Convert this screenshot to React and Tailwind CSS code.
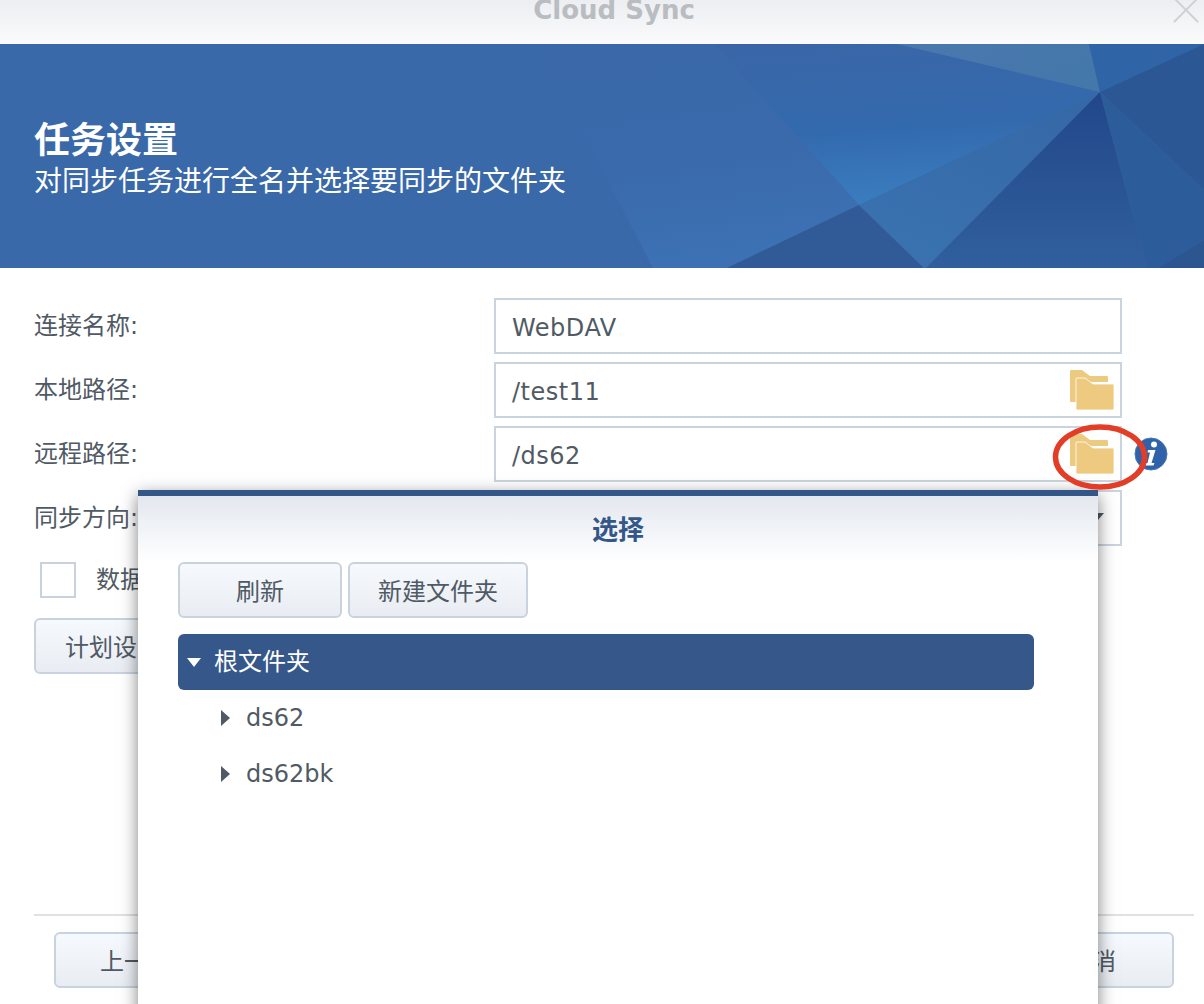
import React from 'react';
import { X } from 'lucide-react';

const btn = "h-14 shrink-0 rounded-md border-2 border-[#c9d3de] bg-gradient-to-b from-[#f6f9fd] to-[#e9edf3] pt-1 text-[24px] text-[#505a64] flex items-center justify-center";
const field = "relative h-14 w-[628px] shrink-0 border-2 border-[#c9d4df] bg-white pl-[16px] pt-[3px] flex items-center text-[24px] tracking-[0.5px] text-[#505a64]";
const label = "w-[494px] shrink-0 pl-[34px] text-[24px] text-[#505a64]";

const FolderIcon = () => (
  <svg width="44" height="40" viewBox="0 0 44 40" className="absolute left-[574px] top-[6px]">
    <path d="M1 0H12L20 6H37a1 1 0 0 1 1 1V12H6V32H1a1 1 0 0 1-1-1V1a1 1 0 0 1 1-1z" fill="#ecca80" />
    <path d="M7 8H15L23 14H43a1 1 0 0 1 1 1V39a1 1 0 0 1-1 1H7a1 1 0 0 1-1-1V9a1 1 0 0 1 1-1z" fill="#edca7f" stroke="#fff" strokeWidth="0.8" />
  </svg>
);

const InfoIcon = () => (
  <svg width="34" height="34" viewBox="0 0 34 34" className="ml-[12px] shrink-0">
    <circle cx="17" cy="17" r="16" fill="#2f62a8" stroke="#4a78b8" strokeWidth="1" />
    <circle cx="20" cy="7.5" r="3" fill="#fff" />
    <path d="M14 13H21.5L17.5 26H20.5L19.5 28.5H10.5L11.5 26H13.5L16 15.5H13.5z" fill="#fff" />
  </svg>
);

const BannerArt = () => (
  <svg viewBox="0 0 1204 224" width="1204" height="224" className="absolute inset-0">
    <defs>
      <linearGradient id="g1" x1="0" y1="0" x2="0.2" y2="1">
        <stop offset="0" stopColor="#3a68a9" />
        <stop offset="0.6" stopColor="#3a6aab" />
        <stop offset="1" stopColor="#3c71b3" />
      </linearGradient>
      <linearGradient id="g2" x1="0.2" y1="0" x2="0.35" y2="1">
        <stop offset="0" stopColor="#3a66a7" />
        <stop offset="0.55" stopColor="#336aae" />
        <stop offset="1" stopColor="#3a7dbf" />
      </linearGradient>
      <linearGradient id="g3" x1="0.8" y1="0" x2="0.2" y2="1">
        <stop offset="0" stopColor="#3568a6" />
        <stop offset="1" stopColor="#3a72b0" />
      </linearGradient>
      <linearGradient id="g4" x1="0" y1="0" x2="0" y2="1">
        <stop offset="0" stopColor="#21478a" />
        <stop offset="1" stopColor="#315f9d" />
      </linearGradient>
      <linearGradient id="g5" x1="0" y1="0" x2="1" y2="0.6">
        <stop offset="0" stopColor="#4a78ae" />
        <stop offset="1" stopColor="#4477aa" />
      </linearGradient>
    </defs>
    <rect width="1204" height="224" fill="#3a69a9" />
    <polygon points="538,0 714,0 859,161 727,224 653,224" fill="url(#g1)" />
    <polygon points="714,0 897,0 1100,48 859,161" fill="url(#g2)" />
    <polygon points="897,0 1089,0 1100,48" fill="url(#g5)" />
    <polygon points="1089,0 1204,0 1100,48" fill="#2f65a7" />
    <polygon points="1100,48 1204,0 1204,146" fill="#2b5895" />
    <polygon points="859,161 727,224 924,224" fill="#315b97" />
    <polygon points="859,161 1100,48 926,224 924,224" fill="url(#g3)" />
    <polygon points="1100,48 926,224 1147,224" fill="url(#g4)" />
    <polygon points="1100,48 1204,146 1204,196 1158,224 1147,224" fill="#2d5c9b" />
    <polygon points="1204,196 1158,224 1204,224" fill="#2c5690" />
  </svg>
);

const TreeItem = ({ name }) => (
  <div className="h-14 w-[856px] pl-[43px] flex items-center text-[24px] text-[#505a64]">
    <span className="w-0 h-0 border-y-[8px] border-y-transparent border-l-[9px] border-l-[#505a64] mr-[16px]" />
    {name}
  </div>
);

export default function App() {
  return (
    <div className="relative w-[1204px] h-[1004px] overflow-hidden bg-white flex flex-col font-['DejaVu_Sans','Noto_Sans_CJK_SC',sans-serif]">
      {/* title bar */}
      <div className="relative h-11 shrink-0 bg-gradient-to-b from-[#eceef1] to-[#fbfbfc] overflow-hidden">
        <p className="text-center text-[26px] leading-[20px] font-bold text-[#b9bdc1] pl-[24px]">Cloud Sync</p>
        <X size={46} strokeWidth={1} className="absolute right-[-5px] top-[-13px] text-[#cfd1d4]" />
      </div>

      {/* banner */}
      <div className="relative h-[224px] shrink-0 text-white font-['Noto_Sans_CJK_SC',sans-serif]">
        <BannerArt />
        <div className="relative pl-[34px] pt-[69px]">
          <h1 className="text-[36px] leading-[48px] font-bold">任务设置</h1>
          <p className="text-[28px] leading-[36px]">对同步任务进行全名并选择要同步的文件夹</p>
        </div>
      </div>

      {/* form */}
      <div className="flex flex-col gap-2 pt-[30px]">
        <div className="flex items-center">
          <span className={label}>连接名称:</span>
          <div className={field}>WebDAV</div>
        </div>
        <div className="flex items-center">
          <span className={label}>本地路径:</span>
          <div className={field}>/test11<FolderIcon /></div>
        </div>
        <div className="flex items-center">
          <span className={label}>远程路径:</span>
          <div className={field}>/ds62<FolderIcon /></div>
          <InfoIcon />
        </div>
        <div className="flex items-center">
          <span className={label}>同步方向:</span>
          <div className={field}>
            <span className="absolute left-[596px] top-[21px] w-0 h-0 border-x-[6px] border-x-transparent border-t-[7px] border-t-[#505a64]" />
          </div>
        </div>
      </div>

      <div className="flex items-center pl-[40px] pt-4">
        <span className="w-9 h-9 border-2 border-[#c9d1db] bg-white shrink-0" />
        <span className="ml-[20px] text-[24px] text-[#505a64]">数据传输加密</span>
      </div>
      <div className="pl-[34px] pt-[20px]">
        <div className={`${btn} w-[158px]`}>计划设置</div>
      </div>

      {/* footer */}
      <div className="mt-auto ml-[34px] w-[1160px] h-[2px] bg-[#e0e1e4]" />
      <div className="flex justify-between pl-[54px] pr-[30px] pt-4 pb-4">
        <div className={`${btn} w-[164px]`}>上一步</div>
        <div className={`${btn} w-[164px]`}>取消</div>
      </div>

      {/* folder picker dialog */}
      <div className="absolute left-[138px] top-[490px] w-[960px] h-[530px] bg-white border-t-[6px] border-t-[#34578a] shadow-[0_5px_16px_rgba(0,0,0,0.5)]">
        <div className="h-[66px] pb-[4px] bg-gradient-to-b from-[#e3e8ef] to-white flex items-center justify-center text-[26px] font-bold text-[#34578a] font-['Noto_Sans_CJK_SC',sans-serif]">
          选择
        </div>
        <div className="pl-10">
          <div className="flex gap-1.5">
            <div className={`${btn} w-[164px]`}>刷新</div>
            <div className={`${btn} w-[180px]`}>新建文件夹</div>
          </div>
          <div className="mt-4 h-14 w-[856px] rounded-md bg-[#36578a] pl-[9px] flex items-center text-[24px] text-white">
            <span className="w-0 h-0 border-x-[7.5px] border-x-transparent border-t-[9px] border-t-white mr-[13px]" />
            根文件夹
          </div>
          <TreeItem name="ds62" />
          <TreeItem name="ds62bk" />
        </div>
      </div>

      {/* red annotation circle */}
      <svg width="104" height="74" viewBox="0 0 104 74" className="absolute left-[1048px] top-[420px]">
        <ellipse cx="52" cy="37" rx="44.5" ry="30" fill="none" stroke="#e23d26" strokeWidth="5.5" />
      </svg>
    </div>
  );
}
